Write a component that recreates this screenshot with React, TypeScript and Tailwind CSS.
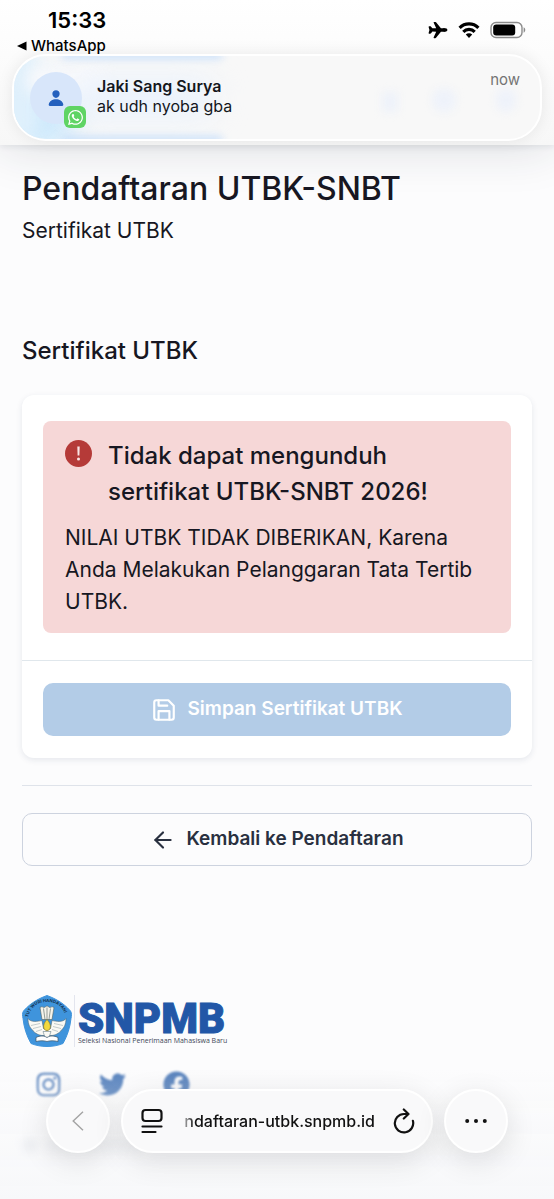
import type { ReactNode } from 'react';
import { FaFacebook, FaInstagram, FaTwitter, FaWhatsapp } from 'react-icons/fa';
import { FiArrowLeft, FiSave } from 'react-icons/fi';
import { IoAirplane, IoPerson } from 'react-icons/io5';

const WifiIcon = () => (
	<svg viewBox="0 0 22 16" className="h-4 w-[22px]" aria-hidden="true">
		<g fill="none" stroke="#000" strokeWidth="3.2">
			<path d="M1.600 5.800a13.300 13.300 0 0 1 18.800 0" />
			<path d="M5.300 9.800a8 8 0 0 1 11.400 0" />
		</g>
		<path d="M11 15.900 7.800 12.600a4.600 4.600 0 0 1 6.400 0Z" />
	</svg>
);

const BatteryIcon = () => (
	<svg viewBox="0 0 36 18" className="h-[18px] w-9" aria-hidden="true">
		<rect
			x="1"
			y="1.500"
			width="31"
			height="15"
			rx="5"
			fill="none"
			stroke="#8b8b8b"
			strokeWidth="1.400"
		/>
		<rect x="3.200" y="3.600" width="22" height="10.800" rx="3" />
		<path d="M33.600 6.300c2.200.9 2.200 4.500 0 5.400Z" fill="#8b8b8b" />
	</svg>
);

const StatusBar = () => (
	<div className="flex items-start justify-between pl-[17px] pr-7 pt-2">
		<div>
			<div className="pl-[31px] text-[22px] font-semibold leading-6">15:33</div>
			<a
				href="#whatsapp"
				className="mt-[5px] flex items-center gap-1 text-[15px] font-medium leading-[18px]"
			>
				<svg viewBox="0 0 10 10" className="h-[10px] w-[10px]" aria-hidden="true">
					<path d="M0 5 9.500.5v9Z" />
				</svg>
				WhatsApp
			</a>
		</div>
		<div className="mt-3 flex items-center gap-[10px]">
			<IoAirplane className="h-5 w-5" />
			<WifiIcon />
			<BatteryIcon />
		</div>
	</div>
);

const Notification = () => (
	<section className="relative mx-3 -mt-px flex h-[87px] overflow-hidden rounded-[34px] border-2 border-white bg-[#f8f8f8] pl-4 pr-5 pt-4 shadow-[0_0_16px_rgba(0,0,0,0.08)]">
		{/* header content that shines through the glass */}
		<div className="absolute -left-4 top-4 h-20 w-20 rounded-full bg-[#cfeafc] blur-md" />
		<div className="absolute -left-3 -top-3 h-24 w-9 rounded-full bg-[#dff0fc] blur-sm" />
		<div className="absolute left-3 top-2 h-8 w-20 rounded-full bg-[#f9f9fb] blur-sm" />
		<div className="absolute left-14 top-6 h-9 w-36 rounded-full bg-[#e9f2fd] blur-lg" />
		<div className="absolute -top-1 left-12 h-[6px] w-40 bg-[#bcd9fb] blur-xs" />
		<div className="absolute -bottom-1 left-12 h-[6px] w-40 bg-[#bcd9fb] blur-xs" />
		<div className="absolute right-[142px] top-9 h-5 w-4 bg-[#eef2fa] blur-xs" />
		<div className="absolute right-[84px] top-8 h-6 w-6 rounded-full bg-[#eef2fa] blur-xs" />
		<div className="absolute right-6 top-8 h-6 w-5 rounded-full bg-[#eef2fa] blur-xs" />

		<div className="relative flex h-[52px] w-[52px] shrink-0 items-center justify-center rounded-full bg-[#d8e6fa]">
			<IoPerson className="h-[18px] w-[18px] text-[#2460bd]" />
			<div className="absolute -bottom-1 -right-1 flex h-[22px] w-[22px] items-center justify-center rounded-[6px] bg-[#5fd464]">
				<FaWhatsapp className="h-[17px] w-[17px] text-white" />
			</div>
		</div>
		<div className="relative ml-[15px] mt-1 grow text-base leading-5 text-[#14171c]">
			<div className="font-semibold">Jaki Sang Surya</div>
			<div>ak udh nyoba gba</div>
		</div>
		<time className="relative -mt-[2px] text-[15px] leading-5 text-[#747474]">now</time>
	</section>
);

const Crest = () => (
	<svg viewBox="1 0.5 50 52" className="h-[52px] w-[50px] shrink-0" aria-hidden="true">
		<path
			d="M26 1c8 3 16 7 23.500 15.500C51 19 50.500 21 50 24c-1 9-3.500 17-8 25-10 4-22 4-32 0C5.500 41 3 33 2 24c-.5-3-1-5 .5-7.500C10 8 18 4 26 1Z"
			fill="#3f94dc"
			stroke="#3f94dc"
			strokeLinejoin="round"
		/>
		<path id="crest-arc" d="M7 23C11 9 20 7.500 26 7.500S41 9 45 23" fill="none" />
		<text
			fontFamily="Inter, sans-serif"
			fontSize="4.300"
			fontWeight="700"
			fill="#15324f"
		>
			<textPath href="#crest-arc">TUT WURI HANDAYANI</textPath>
		</text>
		<path
			d="M19 13c2-1.500 3 0 4 0s2-1.500 3-1.500 2 1.500 3 1.500 2-1.500 4 0l-2 12h-10Z"
			fill="#f5f3ea"
			stroke="#53635f"
			strokeWidth=".6"
		/>
		<path d="m22.500 14 1.500 11M26 13v12M29.500 14 28 25" stroke="#53635f" strokeWidth=".6" />
		<path
			d="M7 24c3 4 9 3 14 2l1.500 8 3.500 2 3.500-2L31 26c5 1 11 2 14-2 0 6-2 9-4 11-3 4-7 6-11 6h-8c-4 0-8-2-11-6-2-2-4-5-4-11Z"
			fill="#fbfaf4"
			stroke="#4e6a78"
			strokeWidth=".6"
		/>
		<path
			d="m10 31 9-2m-7 5 8-2m-5 5 6-2m21-4-9-2m7 5-8-2m5 5-6-2"
			stroke="#8d9da0"
			strokeWidth=".5"
		/>
		<path d="M26 25c5 5 4 11 0 11s-5-6 0-11Z" fill="#f2d83d" stroke="#8e7420" strokeWidth=".6" />
		<path d="M22 37h8l-2 6h-4Z" fill="#fbfaf4" stroke="#4e6a78" strokeWidth=".5" />
		<path
			d="M15 43c4-2 8-2 11 0 3-2 7-2 11 0v4c-4-1-8-1-11 0-3-1-7-1-11 0Z"
			fill="#fff"
			stroke="#3b5365"
			strokeWidth=".7"
		/>
	</svg>
);

const Footer = () => (
	<footer className="mt-[129px] px-[22px]">
		<div className="flex items-center">
			<Crest />
			<div className="ml-[2px] h-[52px] w-px bg-[#e3e5ee]" />
			<div className="ml-[3px] pt-1">
				<div className="font-[Roboto,sans-serif] text-[42px] font-black leading-9 text-[#2257a7] [-webkit-text-stroke:1px_#2257a7]">
					SNPMB
				</div>
				<div className="whitespace-nowrap font-['Open_Sans',sans-serif] text-[7px] leading-2 text-[#414959]">
					Seleksi Nasional Penerimaan Mahasiswa Baru
				</div>
			</div>
		</div>
		<div className="mt-6 flex gap-[37px] pl-[13px] text-[#5782bd] blur-[1px]">
			<a href="#instagram" aria-label="Instagram">
				<FaInstagram className="h-[27px] w-[27px]" />
			</a>
			<a href="#twitter" aria-label="Twitter">
				<FaTwitter className="h-[27px] w-[27px]" />
			</a>
			<a href="#facebook" aria-label="Facebook">
				<FaFacebook className="h-[27px] w-[27px]" />
			</a>
		</div>
		<div className="mt-10 flex gap-2 pb-10 blur-xs" aria-hidden="true">
			<div className="h-4 w-4 rounded-full bg-[#e0e2e7]" />
			<div className="h-4 w-24 bg-[#ebecf0]" />
		</div>
	</footer>
);

const GlassButton = ({ label, children }: { label: string; children: ReactNode }) => (
	<button
		type="button"
		aria-label={label}
		className="flex h-16 w-16 shrink-0 items-center justify-center rounded-full border-2 border-white bg-[#f9f9fa] shadow-[0_8px_30px_rgba(0,0,0,0.12)]"
	>
		{children}
	</button>
);

const BrowserBar = () => (
	<nav className="fixed inset-x-0 bottom-0 flex gap-[11px] bg-linear-to-b from-transparent to-[#f7f8fa] px-[46px] pb-[46px] pt-5">
		<GlassButton label="Back">
			<svg viewBox="0 0 12 20" className="h-5 w-3" fill="none" stroke="#a3a3a3" strokeWidth="1.400">
				<path d="M11 .7 1.200 10 11 19.300" />
			</svg>
		</GlassButton>
		<div className="flex h-16 min-w-0 grow items-center rounded-full border-2 border-white bg-[#f9f9fa] pl-[18px] pr-4 shadow-[0_8px_30px_rgba(0,0,0,0.12)]">
			<button type="button" aria-label="Page menu">
				<svg
					viewBox="0 0 22 26"
					className="h-[26px] w-[22px]"
					fill="none"
					stroke="#111"
					strokeWidth="2.200"
					strokeLinecap="round"
				>
					<rect x="1.500" y="2" width="19" height="11" rx="3" />
					<path d="M1.500 18.500h19M1.500 24h13" />
				</svg>
			</button>
			<div className="ml-4 flex min-w-0 grow justify-end overflow-hidden whitespace-nowrap text-base font-medium leading-6 text-[#111] mask-l-from-92%">
				ndaftaran-utbk.snpmb.id
			</div>
			<button type="button" aria-label="Reload" className="ml-[18px]">
				<svg
					viewBox="0 0 22 26"
					className="h-[26px] w-[22px]"
					fill="none"
					stroke="#111"
					strokeWidth="2.200"
					strokeLinecap="round"
					strokeLinejoin="round"
				>
					<path d="M19.900 12.800A9.200 9.200 0 1 1 11 6h4.500M10.800 1.500 15.500 6l-4.700 4.500" />
				</svg>
			</button>
		</div>
		<GlassButton label="More">
			<svg viewBox="0 0 22 4" className="h-1 w-[22px]" fill="#111">
				<circle cx="2.200" cy="2" r="2" />
				<circle cx="11" cy="2" r="2" />
				<circle cx="19.800" cy="2" r="2" />
			</svg>
		</GlassButton>
	</nav>
);

const AlertBox = () => (
	<div role="alert" className="rounded-lg bg-[#f6d7d7] px-[22px] pb-[15px] pt-4">
		<div className="flex gap-4">
			<svg viewBox="0 0 27 27" className="mt-[3px] h-[27px] w-[27px] shrink-0" aria-hidden="true">
				<circle cx="13.500" cy="13.500" r="13.500" fill="#b53a38" />
				<path d="M12.300 6.500h2.400l-.3 9h-1.800Z" fill="#f9e4e4" />
				<circle cx="13.500" cy="18.900" r="1.500" fill="#f9e4e4" />
			</svg>
			<h3 className="mt-px text-2xl font-medium leading-9">
				Tidak dapat mengunduh sertifikat UTBK-SNBT 2026!
			</h3>
		</div>
		<p className="mt-3 text-[21px] leading-8">
			NILAI UTBK TIDAK DIBERIKAN, Karena Anda Melakukan Pelanggaran Tata Tertib UTBK.
		</p>
	</div>
);

export default function App() {
	return (
		<div className="min-h-screen bg-[#fcfcfd] font-[Inter,sans-serif] text-[#171722]">
			<header className="h-[145px] bg-linear-to-b from-white to-[#f7f7f7] text-black shadow-[0_2px_6px_rgba(30,41,59,0.08),0_4px_44px_rgba(30,41,59,0.14)]">
				<StatusBar />
				<Notification />
			</header>

			<main className="px-[22px] pt-6">
				<h1 className="text-[32px] font-medium leading-10">Pendaftaran UTBK-SNBT</h1>
				<p className="mt-[6px] text-[21px] leading-8">Sertifikat UTBK</p>
				<h2 className="mt-[86px] text-2xl font-medium leading-9">Sertifikat UTBK</h2>

				<section className="mt-[26px] rounded-xl bg-white shadow-[0_2px_6px_rgba(30,50,90,0.10)]">
					<div className="px-[21px] pb-[27px] pt-[26px]">
						<AlertBox />
					</div>
					<div className="border-t border-[#e0e7ec] px-[21px] py-[22px]">
						<button
							type="button"
							disabled
							className="flex h-[53px] w-full items-center justify-center gap-[10px] rounded-[10px] bg-[#b3cce7] text-[19px] font-semibold text-white"
						>
							<FiSave className="h-[26px] w-[26px]" />
							Simpan Sertifikat UTBK
						</button>
					</div>
				</section>

				<hr className="mt-[27px] border-[#dfe3ea]" />

				<button
					type="button"
					className="mt-[27px] flex h-[53px] w-full items-center justify-center gap-[10px] rounded-[10px] border border-[#cdd3df] text-[19px] font-semibold text-[#293040]"
				>
					<FiArrowLeft className="h-[26px] w-[26px]" />
					Kembali ke Pendaftaran
				</button>
			</main>

			<Footer />
			<BrowserBar />
		</div>
	);
}
